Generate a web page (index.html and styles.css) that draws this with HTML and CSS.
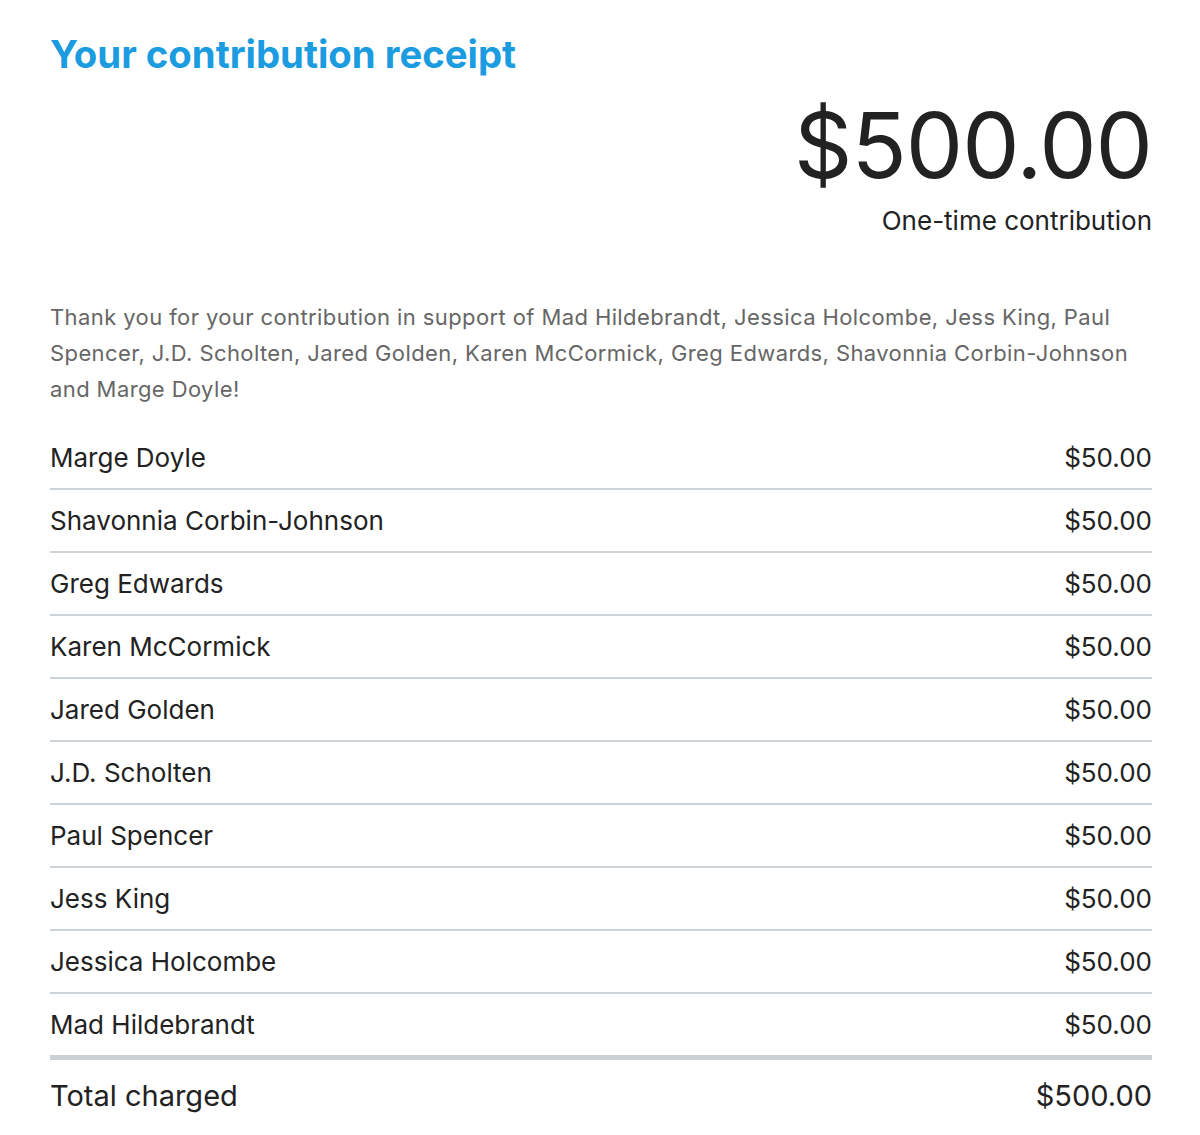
FILE: index.html
```html
<!DOCTYPE html>
<html>
<head>
<meta charset="utf-8">
<link rel="stylesheet" href="styles.css">
</head>
<body>
<main class="receipt">
  <h1 class="title">Your contribution receipt</h1>
  <section class="summary">
    <div class="amount">$500.00</div>
    <div class="kind">One-time contribution</div>
  </section>
  <p class="thanks">Thank you for your contribution in support of Mad Hildebrandt, Jessica Holcombe, Jess King, Paul Spencer, J.D. Scholten, Jared Golden, Karen McCormick, Greg Edwards, Shavonnia Corbin-Johnson and Marge Doyle!</p>
  <ul class="lines">
    <li class="line"><span>Marge Doyle</span><span>$50.00</span></li>
    <li class="line"><span>Shavonnia Corbin-Johnson</span><span>$50.00</span></li>
    <li class="line"><span>Greg Edwards</span><span>$50.00</span></li>
    <li class="line"><span>Karen McCormick</span><span>$50.00</span></li>
    <li class="line"><span>Jared Golden</span><span>$50.00</span></li>
    <li class="line"><span>J.D. Scholten</span><span>$50.00</span></li>
    <li class="line"><span>Paul Spencer</span><span>$50.00</span></li>
    <li class="line"><span>Jess King</span><span>$50.00</span></li>
    <li class="line"><span>Jessica Holcombe</span><span>$50.00</span></li>
    <li class="line line-last"><span>Mad Hildebrandt</span><span>$50.00</span></li>
  </ul>
  <div class="total"><span>Total charged</span><span>$500.00</span></div>
</main>
</body>
</html>
```
FILE: styles.css
```css
html, body {
  margin: 0;
  padding: 0;
  background: #ffffff;
}
body {
  font-family: Inter, "Noto Sans", "Liberation Sans", sans-serif;
  color: #222222;
}
.receipt {
  width: 1102px;
  margin-left: 50px;
  padding-top: 30px;
}
.title {
  margin: 0;
  font-size: 38.3px;
  line-height: 48px;
  font-weight: 700;
  color: #1b9be0;
}
.summary {
  display: flex;
  flex-direction: column;
  align-items: flex-end;
  margin-top: 12px;
}
.amount {
  font-size: 91px;
  line-height: 110px;
  font-weight: 400;
  color: #222222;
  letter-spacing: -1px;
}
.kind {
  font-size: 26px;
  line-height: 36px;
  margin-top: 3px;
}
.thanks {
  margin: 60px 0 0 0;
  font-size: 22px;
  line-height: 36px;
  letter-spacing: 0.4px;
  color: #666666;
}
.lines {
  list-style: none;
  margin: 20px 0 0 0;
  padding: 0;
}
.line {
  display: flex;
  justify-content: space-between;
  align-items: center;
  height: 61px;
  font-size: 26px;
  border-bottom: 2px solid #ccd3d9;
}
.line-last {
  border-bottom: 5px solid #ccd1d6;
}
.total {
  display: flex;
  justify-content: space-between;
  align-items: center;
  height: 70px;
  font-size: 29px;
}
```
